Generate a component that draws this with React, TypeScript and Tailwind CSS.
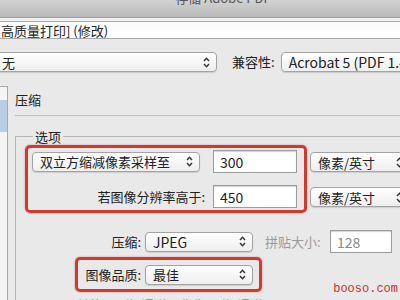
import React from "react";

/* ─── Small Mac-style controls ─────────────────────────────────────────── */
function Arrows() {
  return (
    <svg width="7" height="11" viewBox="0 0 7 11" className="shrink-0" aria-hidden="true">
      <path d="M1 4 L3.5 1.2 L6 4" fill="none" stroke="#333" strokeWidth="1.4" />
      <path d="M1 7 L3.5 9.8 L6 7" fill="none" stroke="#333" strokeWidth="1.4" />
    </svg>
  );
}

function Select({ label, className }: { label: string; className: string }) {
  return (
    <div
      className={
        "flex h-[20px] shrink-0 items-center justify-between rounded-[4px] border border-[#a3a3a3] bg-gradient-to-b from-white to-[#eeeeee] pl-[7px] pr-[6px] text-[13px] leading-none text-[#222] shadow-[0_1px_1px_rgba(0,0,0,0.12)] " +
        className
      }
    >
      <span className="whitespace-nowrap">{label}</span>
      <Arrows />
    </div>
  );
}

function Field({ value, className, dim }: { value: string; className: string; dim?: boolean }) {
  return (
    <div
      className={
        "flex h-[23px] shrink-0 items-center border border-[#9c9c9c] bg-white pl-[6px] text-[14px] leading-none shadow-[inset_0_1px_1px_rgba(0,0,0,0.18)] " +
        (dim ? "text-[#8a8a8a] " : "text-[#222] ") +
        className
      }
    >
      {value}
    </div>
  );
}

/* ─── App ──────────────────────────────────────────────────────────────── */
export default function App() {
  return (
    <div className="relative flex h-[300px] w-[400px] flex-col overflow-hidden bg-[#e9e9e9] font-['Noto_Sans_CJK_SC','Liberation_Sans',sans-serif] text-[#222]">
      {/* title bar, top cut off */}
      <div className="flex h-[18px] shrink-0 justify-center overflow-hidden border-b border-[#9d9d9d] bg-gradient-to-b from-[#d2d2d2] to-[#b9b9b9]">
        <span className="ml-[46px] mt-[-12px] whitespace-nowrap text-[13px] leading-[20px] text-[#555]">存储 Adobe PDF</span>
      </div>
      <div className="h-[3px] shrink-0 bg-[#f1f1f1]" />

      {/* preset field */}
      <div className="flex h-[18px] shrink-0 items-center whitespace-nowrap border-y border-[#a9a9a9] bg-gradient-to-b from-[#fbfbfb] to-white pl-[1px] text-[13px] leading-none">
        高质量打印] (修改)
      </div>

      {/* standard / compatibility */}
      <div className="mt-[13px] flex h-[20px] shrink-0 items-center">
        <Select label="无" className="ml-[-6px] w-[223px] rounded-l-none" />
        <span className="ml-[15px] shrink-0 whitespace-nowrap text-[13px]">兼容性:</span>
        <Select label="Acrobat 5 (PDF 1.4)" className="ml-[6px] w-[170px] text-[14px]" />
      </div>

      {/* main */}
      <div className="mt-[14px] flex min-h-0 flex-1">
        {/* sidebar */}
        <div className="flex w-[8px] shrink-0 flex-col border-r border-t border-[#a8a8a8] bg-[#f4f4f4]">
          <div className="h-[13px]" />
          <div className="h-[32px] bg-[#b9cde6]" />
        </div>

        <div className="flex min-w-0 flex-1 flex-col pl-[7px]">
          <div className="h-[30px] shrink-0 border-b border-[#bdbdbd] pt-[6px] text-[13px] leading-[16px]">压缩</div>

          {/* group legend */}
          <div className="mt-[13px] flex h-[14px] shrink-0 items-center">
            <div className="h-[7px] w-[18px] self-end border-l border-t border-[#b5b5b5]" />
            <span className="px-[2px] text-[13px] leading-none">选项</span>
            <div className="h-px flex-1 bg-[#b5b5b5]" />
          </div>

          {/* group body */}
          <div className="flex flex-1 flex-col border-l border-[#b5b5b5] pl-[9px]">
            <div className="mt-[2px] flex shrink-0">
              <div className="flex w-[282px] shrink-0 flex-col gap-[12px] rounded-[5px] border-[3px] border-[#cf3b30] pb-[2px] pl-[4px] pr-[7px] pt-[2px] shadow-[0_0_2px_rgba(200,50,40,0.5)]">
                <div className="flex h-[23px] items-center gap-[13px]">
                  <Select label="双立方缩减像素采样至" className="w-[168px]" />
                  <Field value="300" className="w-[84px]" />
                </div>
                <div className="flex h-[23px] items-center gap-[8px]">
                  <span className="w-[173px] whitespace-nowrap text-right text-[13px]">若图像分辨率高于:</span>
                  <Field value="450" className="w-[84px]" />
                </div>
              </div>
              <div className="ml-[3px] mt-[7px] flex flex-col gap-[15px]">
                <Select label="像素/英寸" className="w-[100px]" />
                <Select label="像素/英寸" className="w-[100px]" />
              </div>
            </div>

            {/* compression row */}
            <div className="ml-[-9px] mt-[17px] flex h-[23px] shrink-0 items-center">
              <span className="w-[125px] whitespace-nowrap text-right text-[13px]">压缩:</span>
              <Select label="JPEG" className="ml-[4px] w-[108px] text-[14px]" />
              <span className="ml-[12px] w-[60px] whitespace-nowrap text-[13px] text-[#9a9a9a]">拼贴大小:</span>
              <Field value="128" dim className="ml-[5px] w-[62px]" />
            </div>

            {/* quality */}
            <div className="ml-[50px] mt-[4px] flex h-[35px] w-[187px] shrink-0 items-center rounded-[5px] border-[3px] border-[#cf3b30] pr-[6px] shadow-[0_0_2px_rgba(200,50,40,0.5)]">
              <span className="w-[63px] whitespace-nowrap text-right text-[13px]">图像品质:</span>
              <Select label="最佳" className="ml-[4px] w-[108px]" />
            </div>

            <div className="mt-[5px] flex items-start whitespace-nowrap text-[13px] leading-[16px] text-[#8d8d8d]">
              <span className="ml-[2px]">☑</span>
              <span className="ml-[38px]">转换 16 位/通道图像为 8 位/通道</span>
            </div>
          </div>
        </div>
      </div>

      {/* watermark */}
      <span className="absolute bottom-[5px] right-[2px] font-['Liberation_Mono',monospace] text-[12px] leading-none text-[#c8322a]">
        booso.com
      </span>
    </div>
  );
}
